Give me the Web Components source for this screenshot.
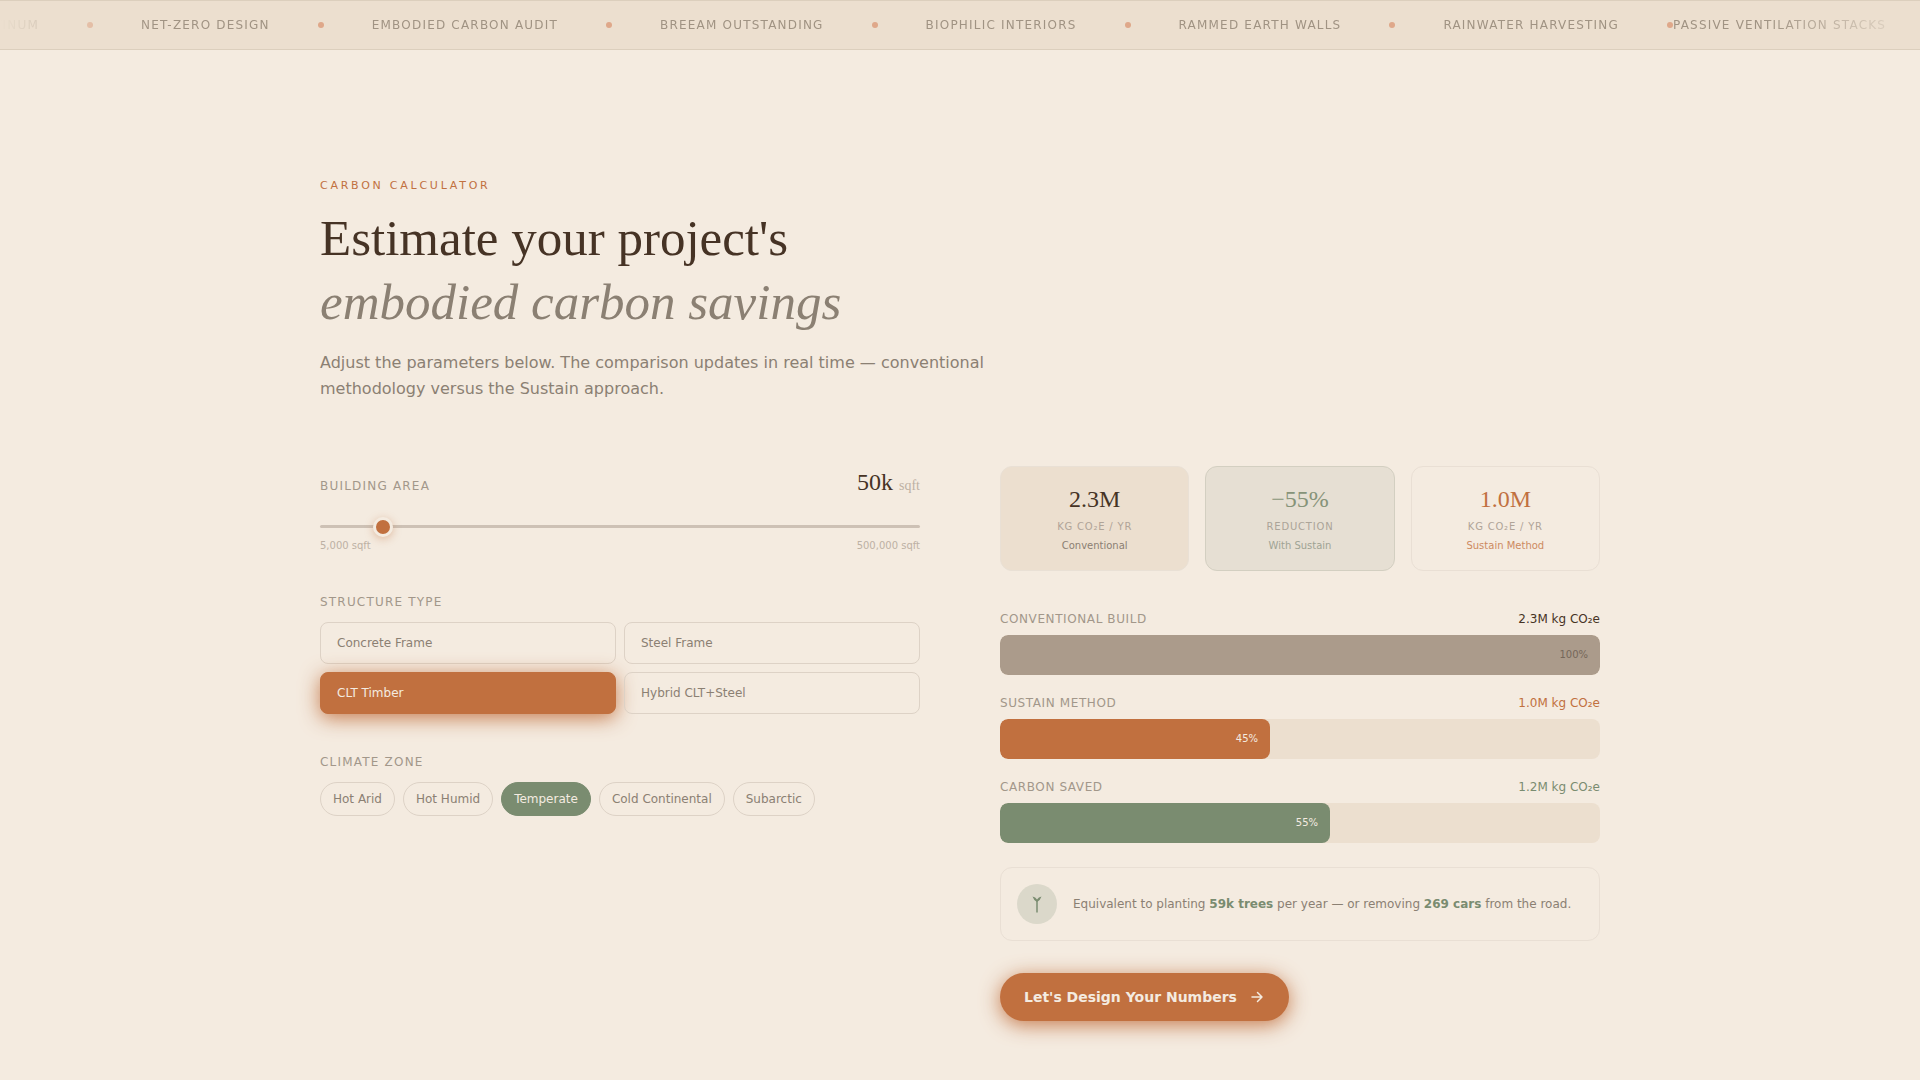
<!DOCTYPE html>
<html lang="en">
<head>
<meta charset="utf-8">
<meta name="viewport" content="width=device-width, initial-scale=1">
<title>Sustain — Carbon Calculator</title>
<style>
    :root
    {
        --cream: #f4ebe0;
        --sand: #ecdfcf;
        --bark: #463325;
        --stone: #8b8073;
        --stone-light: #a2978a;
        --stone-pale: #bdb1a4;
        --line: #ddd2c6;
        --line-soft: #e9dfd4;
        --clay: #c1703f;
        --sage: #7a8c70;
        --serif: "Liberation Serif", serif;
    }
    body
    {
        margin: 0;
        background: var(--cream);
        color: var(--stone);
        font: 12px/16px "DejaVu Sans", sans-serif;
    }
</style>
</head>
<body>

<ticker-strip>
    <ticker-item>Leed Platinum</ticker-item>
    <ticker-item>Net-Zero Design</ticker-item>
    <ticker-item>Embodied Carbon Audit</ticker-item>
    <ticker-item>BREEAM Outstanding</ticker-item>
    <ticker-item>Biophilic Interiors</ticker-item>
    <ticker-item>Rammed Earth Walls</ticker-item>
    <ticker-item last>Rainwater Harvesting</ticker-item>
    <ticker-item>Passive Ventilation Stacks</ticker-item>
</ticker-strip>

<carbon-calculator>
    <section-heading slot="heading">
        <span slot="eyebrow">Carbon Calculator</span>
        <span slot="title">Estimate your project's</span>
        <span slot="accent">embodied carbon savings</span>
        Adjust the parameters below. The comparison updates in real time — conventional methodology versus the Sustain approach.
    </section-heading>

    <area-slider slot="inputs" min="5000" max="500000" value="50000"></area-slider>
    <option-group slot="inputs" label="Structure Type" layout="grid" selected="CLT Timber"
        options="Concrete Frame|Steel Frame|CLT Timber|Hybrid CLT+Steel"></option-group>
    <option-group slot="inputs" label="Climate Zone" layout="pills" selected="Temperate"
        options="Hot Arid|Hot Humid|Temperate|Cold Continental|Subarctic"></option-group>

    <stat-card slot="stats" tone="conventional" value="2.3M" unit="kg CO₂e / yr">Conventional</stat-card>
    <stat-card slot="stats" tone="reduction" value="−55%" unit="Reduction">With Sustain</stat-card>
    <stat-card slot="stats" tone="sustain" value="1.0M" unit="kg CO₂e / yr">Sustain Method</stat-card>

    <carbon-bar slot="bars" tone="conventional" percent="100" amount="2.3M kg CO₂e">Conventional Build</carbon-bar>
    <carbon-bar slot="bars" tone="sustain" percent="45" amount="1.0M kg CO₂e">Sustain Method</carbon-bar>
    <carbon-bar slot="bars" tone="saved" percent="55" amount="1.2M kg CO₂e">Carbon Saved</carbon-bar>

    <equivalent-note slot="summary">Equivalent to planting <b>59k trees</b> per year — or removing <b>269 cars</b> from the road.</equivalent-note>
    <cta-link slot="summary" href="#contact">Let's Design Your Numbers</cta-link>
</carbon-calculator>

<script>
'use strict';

/**
 * Common base: renders the template of the class in an open shadow root.
 */
class BaseElement extends HTMLElement
{
    connectedCallback()
    {
        if( this.shadowRoot )
            return;

        this.attachShadow({mode: "open"});
        this.shadowRoot.innerHTML = this.template();
        this.onRender();
    }

    template() { return '<slot></slot>'; }

    onRender() {}
}

class TickerStrip extends BaseElement
{
    template()
    {
        return `
            <style>
                :host
                {
                    display: block;
                    overflow: hidden;
                    background: var(--sand);
                    border: 1px solid #dccfbd;
                    border-width: 1px 0;
                }
                .window
                {
                    overflow: hidden;
                    -webkit-mask-image: linear-gradient(90deg, transparent, #000 8%, #000 92%, transparent);
                    mask-image: linear-gradient(90deg, transparent, #000 8%, #000 92%, transparent);
                }
                .track
                {
                    display: flex;
                    width: max-content;
                    padding: 16px 0;
                    margin-left: -72px;
                }
            </style>
            <div class="window"><div class="track"><slot></slot></div></div>
        `;
    }
}

class TickerItem extends BaseElement
{
    template()
    {
        return `
            <style>
                :host
                {
                    display: flex;
                    align-items: center;
                    gap: 48px;
                    margin-right: 48px;
                    color: #a09383;
                    letter-spacing: .1em;
                    text-transform: uppercase;
                    white-space: nowrap;
                }
                :host([last]) { margin-right: 0; }
                i
                {
                    width: 6px;
                    height: 6px;
                    border-radius: 50%;
                    background: #dfa88a;
                }
            </style>
            <span><slot></slot></span><i></i>
        `;
    }
}

/**
 * Page section: heading on top, inputs on the left, results on the right.
 */
class CarbonCalculator extends BaseElement
{
    template()
    {
        return `
            <style>
                :host
                {
                    display: block;
                    max-width: 1280px;
                    margin: 0 auto;
                    padding: 128px 32px 48px;
                }
                .columns
                {
                    display: grid;
                    grid-template-columns: 1fr 1fr;
                    gap: 80px;
                    margin-top: 64px;
                }
                .inputs
                {
                    display: flex;
                    flex-direction: column;
                    gap: 40px;
                }
                .stats
                {
                    display: grid;
                    grid-template-columns: repeat(3, 1fr);
                    gap: 16px;
                }
                .bars
                {
                    display: flex;
                    flex-direction: column;
                    gap: 20px;
                    margin: 40px 0 24px;
                }
                .summary
                {
                    display: flex;
                    flex-direction: column;
                    align-items: flex-start;
                    gap: 32px;
                }
                @media (max-width: 900px)
                {
                    .columns { grid-template-columns: 1fr; }
                }
            </style>
            <section>
                <slot name="heading"></slot>
                <div class="columns">
                    <div class="inputs"><slot name="inputs"></slot></div>
                    <div>
                        <div class="stats"><slot name="stats"></slot></div>
                        <div class="bars"><slot name="bars"></slot></div>
                        <div class="summary"><slot name="summary"></slot></div>
                    </div>
                </div>
            </section>
        `;
    }
}

class SectionHeading extends BaseElement
{
    template()
    {
        return `
            <style>
                :host { display: block; }
                .eyebrow
                {
                    margin: 0 0 12px;
                    color: var(--clay);
                    font-size: 11px;
                    letter-spacing: .25em;
                    text-transform: uppercase;
                }
                h2
                {
                    margin: 0 0 16px;
                    color: var(--bark);
                    font: 400 51px/64px var(--serif);
                }
                em { color: var(--stone); }
                .lead
                {
                    max-width: 672px;
                    margin: 0;
                    font-size: 16px;
                    line-height: 26px;
                }
            </style>
            <p class="eyebrow"><slot name="eyebrow"></slot></p>
            <h2><slot name="title"></slot><br><em><slot name="accent"></slot></em></h2>
            <p class="lead"><slot></slot></p>
        `;
    }
}

/**
 * Building area range, with its current value on the right.
 */
class AreaSlider extends BaseElement
{
    template()
    {
        const min = Number(this.getAttribute('min'));
        const max = Number(this.getAttribute('max'));

        return `
            <style>
                :host { display: block; }
                .head, .limits
                {
                    display: flex;
                    justify-content: space-between;
                    align-items: baseline;
                }
                label
                {
                    color: var(--stone-light);
                    letter-spacing: .1em;
                    text-transform: uppercase;
                }
                output
                {
                    color: var(--bark);
                    font: 24px/32px var(--serif);
                }
                small
                {
                    color: var(--stone-pale);
                    font-size: 14px;
                    line-height: 16px;
                }
                input
                {
                    display: block;
                    width: 100%;
                    height: 24px;
                    margin: 16px 0 0;
                    background: none;
                    -webkit-appearance: none;
                    appearance: none;
                    cursor: pointer;
                }
                input::-webkit-slider-runnable-track
                {
                    height: 3px;
                    border-radius: 2px;
                    background: #cdc1b5;
                }
                input::-webkit-slider-thumb
                {
                    -webkit-appearance: none;
                    box-sizing: border-box;
                    width: 20px;
                    height: 20px;
                    margin-top: -8px;
                    border: 3px solid var(--cream);
                    border-radius: 50%;
                    background: var(--clay);
                    box-shadow: 0 2px 8px rgba(193, 112, 63, .4);
                }
                .limits
                {
                    color: var(--stone-pale);
                    font-size: 10px;
                }
            </style>
            <div class="head">
                <label for="area">Building Area</label>
                <output for="area"><span id="value"></span> <small>sqft</small></output>
            </div>
            <input id="area" type="range" min="${min}" max="${max}" step="5000" value="${this.getAttribute('value')}">
            <div class="limits">
                <span>${min.toLocaleString('en-US')} sqft</span>
                <span>${max.toLocaleString('en-US')} sqft</span>
            </div>
        `;
    }

    onRender()
    {
        this.input = this.shadowRoot.querySelector('input');
        this.input.addEventListener('input', () => this.update());
        this.update();
    }

    update()
    {
        this.shadowRoot.querySelector('#value').textContent = Math.round(this.input.value / 1000) + 'k';
    }
}

/**
 * Labelled set of buttons, one of which is pressed.
 * Layout is either "grid" (two columns of boxes) or "pills".
 */
class OptionGroup extends BaseElement
{
    template()
    {
        const selected = this.getAttribute('selected');
        const buttons = this.getAttribute('options').split('|').map(option =>
            `<button type="button" aria-pressed="${option == selected}">${option}</button>`
        ).join('');

        return `
            <style>
                :host { display: block; }
                h3
                {
                    margin: 0 0 12px;
                    color: var(--stone-light);
                    font: inherit;
                    letter-spacing: .1em;
                    text-transform: uppercase;
                }
                button
                {
                    border: 1px solid var(--line);
                    background: none;
                    color: var(--stone);
                    font: inherit;
                    cursor: pointer;
                }
                .grid
                {
                    display: grid;
                    grid-template-columns: 1fr 1fr;
                    gap: 8px;
                }
                .grid button
                {
                    padding: 12px 16px;
                    border-radius: 8px;
                    text-align: left;
                }
                .grid [aria-pressed="true"]
                {
                    border-color: var(--clay);
                    background: var(--clay);
                    color: var(--cream);
                    box-shadow: 0 4px 20px rgba(193, 112, 63, .9);
                }
                .pills
                {
                    display: flex;
                    flex-wrap: wrap;
                    gap: 8px;
                }
                .pills button
                {
                    padding: 8px 12px;
                    border-radius: 17px;
                }
                .pills [aria-pressed="true"]
                {
                    border-color: var(--sage);
                    background: var(--sage);
                    color: var(--cream);
                }
            </style>
            <h3 id="label">${this.getAttribute('label')}</h3>
            <div class="${this.getAttribute('layout')}" role="group" aria-labelledby="label">${buttons}</div>
        `;
    }

    onRender()
    {
        const buttons = this.shadowRoot.querySelectorAll('button');
        for(const button of buttons)
            button.addEventListener('click', () => {
                for(const other of buttons)
                    other.setAttribute('aria-pressed', other == button);
            });
    }
}

class StatCard extends BaseElement
{
    template()
    {
        return `
            <style>
                :host
                {
                    display: block;
                    padding: 16px;
                    border: 1px solid var(--line-soft);
                    border-radius: 12px;
                    text-align: center;
                    font-size: 10px;
                }
                p { margin: 0; }
                .value { font: 24px/32px var(--serif); }
                .unit
                {
                    margin-top: 4px;
                    color: #b0a498;
                    letter-spacing: .08em;
                    text-transform: uppercase;
                }
                .note { margin-top: 3px; }
                :host([tone="conventional"]) { background: var(--sand); border-color: #e9e0d5; }
                :host([tone="conventional"]) .value { color: var(--bark); }
                :host([tone="reduction"])
                {
                    background: #e6dfd3;
                    border-color: #d3cfc1;
                    color: #9fa394;
                }
                :host([tone="reduction"]) .value { color: #869379; }
                :host([tone="reduction"]) .unit { color: #aba498; }
                :host([tone="sustain"]) { color: #cd8a61; }
                :host([tone="sustain"]) .value { color: var(--clay); }
            </style>
            <p class="value">${this.getAttribute('value')}</p>
            <p class="unit">${this.getAttribute('unit')}</p>
            <p class="note"><slot></slot></p>
        `;
    }
}

/**
 * Horizontal bar, filled up to "percent".
 */
class CarbonBar extends BaseElement
{
    template()
    {
        const percent = this.getAttribute('percent');

        return `
            <style>
                :host
                {
                    display: block;
                    --fill: #ab9b8b;
                    --amount: var(--bark);
                    --inner: #75675a;
                }
                :host([tone="sustain"]) { --fill: var(--clay); --amount: var(--clay); --inner: var(--cream); }
                :host([tone="saved"]) { --fill: var(--sage); --amount: var(--sage); --inner: var(--cream); }
                .head
                {
                    display: flex;
                    justify-content: space-between;
                    margin-bottom: 8px;
                }
                .name
                {
                    color: var(--stone-light);
                    letter-spacing: .05em;
                    text-transform: uppercase;
                }
                .amount { color: var(--amount); }
                .rail
                {
                    overflow: hidden;
                    border-radius: 8px;
                    background: var(--sand);
                }
                .fill
                {
                    box-sizing: border-box;
                    width: ${percent}%;
                    padding: 12px;
                    border-radius: 8px;
                    background: var(--fill);
                    color: var(--inner);
                    font-size: 10px;
                    text-align: right;
                }
            </style>
            <div class="head">
                <span class="name"><slot></slot></span>
                <span class="amount">${this.getAttribute('amount')}</span>
            </div>
            <div class="rail"><div class="fill">${percent}%</div></div>
        `;
    }
}

class EquivalentNote extends BaseElement
{
    template()
    {
        return `
            <style>
                :host
                {
                    display: flex;
                    align-items: center;
                    align-self: stretch;
                    gap: 16px;
                    padding: 16px;
                    border: 1px solid var(--line-soft);
                    border-radius: 12px;
                }
                .icon
                {
                    display: flex;
                    flex: none;
                    align-items: center;
                    justify-content: center;
                    width: 40px;
                    height: 40px;
                    border-radius: 50%;
                    background: #dbd8ca;
                    color: var(--sage);
                }
                p { margin: 0; }
                ::slotted(b) { color: var(--sage); }
            </style>
            <span class="icon">
                <svg width="20" height="20" viewBox="0 0 20 20" fill="none" stroke="currentColor" stroke-width="1.5" aria-hidden="true">
                    <path d="M10 18.500V6"/>
                    <path d="M5.500 2.500Q8.500 3 10 5.500Q11.500 3 14.500 2.500Q13.500 6 10 8Q6.500 6 5.500 2.500Z" fill="currentColor" stroke="none"/>
                </svg>
            </span>
            <p><slot></slot></p>
        `;
    }
}

class CtaLink extends BaseElement
{
    template()
    {
        return `
            <style>
                :host { display: block; }
                a
                {
                    display: flex;
                    align-items: center;
                    gap: 12px;
                    padding: 16px 24px;
                    border-radius: 24px;
                    background: var(--clay);
                    box-shadow: 0 4px 20px rgba(193, 112, 63, .9);
                    color: var(--cream);
                    font-size: 14px;
                    font-weight: 700;
                    text-decoration: none;
                }
            </style>
            <a href="${this.getAttribute('href')}">
                <slot></slot>
                <svg width="16" height="16" viewBox="0 0 16 16" fill="none" stroke="currentColor" stroke-width="1.5" stroke-linecap="round" stroke-linejoin="round" aria-hidden="true">
                    <path d="M3 8h10M8.500 3.500L13 8l-4.500 4.500"/>
                </svg>
            </a>
        `;
    }
}

customElements.define('ticker-strip', TickerStrip);
customElements.define('ticker-item', TickerItem);
customElements.define('carbon-calculator', CarbonCalculator);
customElements.define('section-heading', SectionHeading);
customElements.define('area-slider', AreaSlider);
customElements.define('option-group', OptionGroup);
customElements.define('stat-card', StatCard);
customElements.define('carbon-bar', CarbonBar);
customElements.define('equivalent-note', EquivalentNote);
customElements.define('cta-link', CtaLink);
</script>
</body>
</html>
